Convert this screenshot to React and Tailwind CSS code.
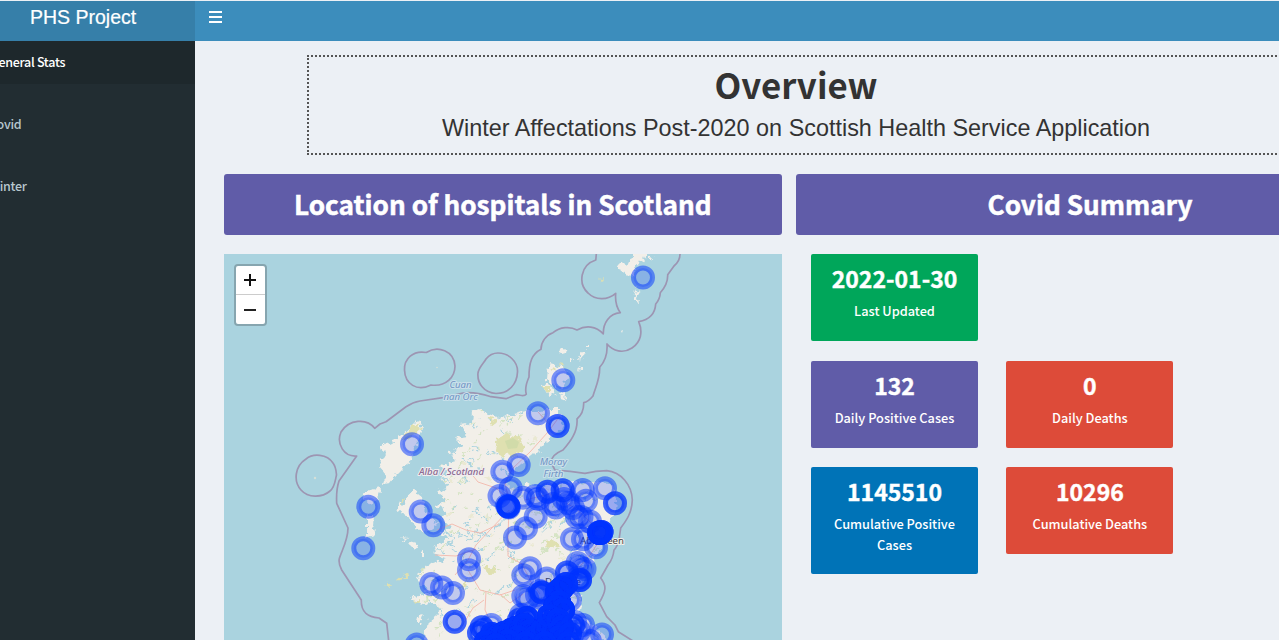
import React from "react";

const SANS = "font-['Noto_Sans_CJK_SC',sans-serif]";

const MENU = [
  { label: "General Stats", active: true, offset: "-ml-[9.9px]" },
  { label: "Covid", active: false, offset: "-ml-[11.2px]" },
  { label: "Winter", active: false, offset: "-ml-[11.2px]" },
];

/* [x, y, number of overlapping hospitals] */
const HOSPITALS = [
  [643, 277.5, 1], [563.3, 380.3, 1], [538, 413.3, 1], [557.7, 426, 2],
  [412, 444.3, 1], [368.3, 506.7, 1], [363.3, 548.3, 1], [420.7, 511.5, 1],
  [433.3, 525.3, 1], [469, 559.3, 1], [469, 570.3, 1], [431.3, 584, 1],
  [442, 587.5, 1], [453, 593, 1], [454.7, 621.7, 2], [416.7, 644.5, 1],
  [502.3, 471.7, 1], [518.7, 465, 1], [510.7, 488.3, 1], [499.5, 496, 1],
  [508.3, 506.5, 4], [508.8, 507.5, 1], [507, 505.5, 1], [523, 497.7, 1], [535.5, 496, 1], [538, 499, 1],
  [547.5, 491.7, 2], [562.7, 490.3, 2], [582.7, 490, 1], [605, 488.3, 1],
  [615, 503.3, 2], [586, 500.7, 1], [556, 507.5, 1], [553, 504, 1], [568, 503, 1],
  [564, 499, 1], [573, 508, 1], [535.7, 516.7, 1], [526, 528.3, 1], [515, 537.5, 1],
  [577, 517, 1], [581.5, 517, 1], [590, 521.5, 1], [572, 539, 1], [583, 539.3, 1],
  [600, 533, 8], [601.5, 532, 4], [599, 532.5, 4], [596, 547.3, 1], [530, 568.3, 1],
  [523.3, 575.3, 1], [546.7, 578.5, 1], [567, 572.5, 2], [577.5, 563, 1],
  [580, 567, 1], [584.5, 569, 1], [580, 580, 3], [578, 578, 1], [562, 588, 10], [557, 592, 6],
  [566, 584, 4], [541.7, 592.5, 3], [540, 591, 1], [523.3, 596, 1], [527.3, 599, 1],
  [537, 595, 1], [570, 600, 1], [559, 602, 8], [555, 607, 6], [563, 610, 8],
  [521, 615, 1], [519, 620, 2], [527, 618, 5], [536, 616, 1], [491.5, 625, 1],
  [481.7, 627.3, 2], [484, 630, 1], [479, 633, 2], [492, 634, 4], [498, 636, 6], [504, 633, 8],
  [511, 630, 8], [516, 628, 8], [524, 625, 8], [530, 631, 9], [518, 637, 9],
  [508, 641, 9], [535, 637, 9], [542, 630, 8], [548, 625, 8], [553, 632, 9],
  [549, 616, 6], [558, 620, 9], [562, 627, 9], [559, 637, 9], [573, 625.5, 2],
  [575, 622, 1], [583, 625, 1], [579, 631, 1], [570, 634, 3], [568, 643, 3], [602, 634.5, 1],
  [590, 641, 1], [486, 642, 7], [496, 645, 9], [526, 643, 9], [545, 643, 9],
];

const MAINLAND =
  "M473 411 L479 409 L486 414 L494 417 L503 415 L510 416 L518 414 L528 411 L538 411 L547 409 L560 409 L560 418 L563 427 L553 436 L546 442 L538 450 L531 457 L521 464 L512 472 L507 481 L510 490 L518 488 L527 484 L538 487 L548 484 L560 483 L575 482 L592 482 L606 481 L613 486 L616 500 L615 512 L609 525 L604 537 L601 548 L593 560 L587 568 L578 577 L566 583 L575 590 L583 600 L580 612 L590 622 L602 634 L610 641 L426 641 L434 628 L445 612 L437 604 L425 604 L412 601 L414 596 L430 593 L420 584 L417 573 L428 565 L437 562 L447 558 L434 553 L436 544 L448 538 L441 534 L452 527 L440 519 L448 513 L437 505 L446 500 L437 492 L449 486 L439 479 L448 474 L441 466 L456 462 L449 452 L463 446 L455 438 L468 436 L460 425 L472 423 Z";

const ISLANDS = [
  "M401 436 L410 428 L418 420 L421 425 L419 438 L413 450 L411 462 L402 468 L396 474 L389 483 L383 484 L386 475 L380 468 L381 458 L388 455 L380 449 L386 442 L394 446 L393 439 Z",
  "M363 494 L371 490 L381 488 L377 498 L371 505 L363 500 Z",
  "M367 516 L374 516 L373 526 L376 535 L367 538 Z",
  "M413 487 L418 494 L423 498 L424 509 L432 517 L437 525 L427 532 L417 529 L411 519 L404 514 L396 510 L399 503 L405 505 L407 498 Z",
  "M410 541 L417 543 L418 548 L413 550 L409 546 Z",
  "M420 551 L424 550 L424 556 L420 556 Z",
  "M402 539 L408 540 L406 542 Z",
  "M418 616 L423 615 L420 624 L417 624 Z",
  "M428 622 L444 608 L441 619 L434 633 L429 640 L423 640 Z",
  "M618 261 L623 262 L629 264 L634 253 L647 253 L645 259 L638 262 L635 272 L631 278 L626 273 L620 271 Z",
  "M636 288 L640 291 L637 296 L638 302 L633 300 L635 294 Z",
  "M650 256 L654 257 L650 262 Z",
  "M547 367 L552 364 L562 367 L568 373 L565 384 L559 388 L550 382 L546 380 Z",
  "M543 386 L550 385 L555 394 L550 397 L545 391 Z",
  "M559 350 L564 349 L568 352 L561 354 Z M576 360 L582 353 L586 351 L582 359 Z M578 366 L582 368 L580 371 Z M586 345 L589 345 L586 348 Z",
  "M561 392 L566 393 L565 401 L562 399 Z",
  "M570 358 L574 359 L571 364 Z",
];

const BOUNDARIES = [
  "M596.3 254 L595.8 260 C580 265 578 284 588 293 C596 301 608 300 615.7 293.3 C615 301 617 308 620.3 312.7 C609 314 603 323 603.3 334 C596 326 586 325 577 330 C570 326 560 327 553 332.7 C546 335 541 342 541 349.3 C532 354 529 362 529 377 C525 386 525 390 526.3 394.3 C524 397 521 395 516 394.7 L506 398.7 L491 396.7 C479 393 470 392 463 393 L443 397.7 L420 401 Q413 402 406 406.7 L386 421.7 L380 424 L374.7 428.3 C367 418 349 419 341 432 C336 444 344 457 356.7 456 L339 481 Q336 490 336.7 503.3 L348 528 C348 540 342 550 339.5 558 Q338 563 341.7 570 L361.3 600 C361 612 367 617 379 618 L386.7 623.3 L388.7 641",
  "M680 254 Q680 261 674 266 L667.7 274.7 Q668 284 660.3 292.7 Q660 299 655.7 304 C655 315 648 320 638.7 321.7 C643 332 641 342 632 348 C623 354 613 351 607 344 Q608 358 599.7 367.3 C600 380 595 388 593 396 Q588 402 583.7 402.7 Q584 413 577 419 C578 432 570 442 563 450 C556 453 550 458 551.7 464 L555 470 L570 471.3 L585 473.3 Q596 471 606.7 470.7 C621 472 632 485 632.3 500 C632 513 626 521 620.7 528 L619 540 Q617 547 614 550 Q613 559 608 565 L600.7 578 C607 586 606 591 599.3 602.7 L606.7 616.7 L615 625 L618.3 631.7 L633 641",
  "M426.3 352.5 C413 350 404 359 404.5 370 C405 384 417 392 431 385 C446 387 455 377 455 366 C454 351 438 345 426.3 352.5 Z",
  "M498 353 C509 353 518 362 517.5 372 C517 384 509 393.5 496 393.5 C484 393 477 383 478 373 C479 367 484 363 486 359 C490 354 494 353 498 353 Z",
  "M306 459 C313 453 327 454 333 463 C336 467 336 470 336.5 475 C335 481 335 487 330 491 C322 498 308 498 301 490 C293 481 295 466 306 459 Z",
];

const ROADS = [
  "M560 416 L548 432 L530 452 L513 468 L505 483 L509 500",
  "M470 472 L478 482 L496 488 L505 496", "M509 510 L490 530 L476 545 L468 560 L455 575",
  "M437 530 L452 524 L466 530 L480 533 L499 524", "M435 555 L456 556 L476 549",
  "M509 510 L508 535 L508 556 L522 564 L531 582 L540 594", "M468 570 L480 590 L500 595 L515 590",
  "M486 592 L485 610 L492 625", "M525 500 L550 494 L575 508 L600 531", "M600 540 L590 555 L575 572 L560 585",
  "M500 594 L510 603 L523 594", "M462 626 L473 608 L484 600", "M538 412 L550 425",
];

const WOODS = [
  "M497 440 L505 434 L517 436 L524 443 L522 452 L514 457 L508 454 L501 456 L495 449 Z",
  "M546 542 L556 540 L559 545 L552 548 L545 547 Z",
  "M487 567 L495 567 L495 572 L488 576 L484 572 Z",
  "M490 418 L495 419 L494 426 L490 425 Z",
  "M401 437 L418 422 L420 429 L412 436 L404 441 Z",
  "M387 583 L392 585 L389 589 L385 587 Z M398 580 L409 571 L407 576 L400 581 Z",
  "M402 496 L405 499 L402 504 Z", "M414 600 L421 599 L419 603 L412 602 Z",
  "M551 369 L556 366 L557 371 Z M543 387 L550 387 L550 392 L546 392 Z M558 363 L564 364 L562 367 Z",
  "M599 279 L603 278 L602 281 Z", "M464 582 L468 580 L464 590 L461 588 Z",
];

function scatter(seed, count) {
  let s = seed;
  const next = () => {
    s = (s * 16807) % 2147483647;
    return s / 2147483647;
  };
  return Array.from({ length: count }, () => {
    const x = 415 + next() * 190;
    const y = 410 + next() * 230;
    const len = 2 + next() * 7;
    return { x, y, len, t: next() };
  });
}

const streak = (list, dx, dy) =>
  list
    .map((p) => `M${p.x.toFixed(1)} ${p.y.toFixed(1)}l${(p.len * dx * (0.5 + p.t)).toFixed(1)} ${(p.len * dy * (0.2 + p.t)).toFixed(1)}`)
    .join("");

const LOCHS_NW = streak(scatter(41, 200).filter((p) => p.x < 505 && p.y < 550), 1, 0.9);
const LOCHS_SW = streak(scatter(97, 110).filter((p) => p.y > 500), 0.8, -1);
const GREENS = streak(scatter(733, 300), 0.5, -0.5);
const PALE = streak(scatter(1999, 60), 0.6, 0.3);

function HospitalMap() {
  return (
    <svg className="block h-full w-full" viewBox="224 254 558.5 386" preserveAspectRatio="none">
      <defs>
        <filter id="coast" x="-5%" y="-5%" width="110%" height="110%" colorInterpolationFilters="sRGB">
          <feTurbulence type="fractalNoise" baseFrequency="0.2" numOctaves="2" seed="4" />
          <feDisplacementMap in="SourceGraphic" scale="9" xChannelSelector="R" yChannelSelector="G" />
        </filter>
        <clipPath id="mainland">
          <path d={MAINLAND} />
        </clipPath>
      </defs>
      <rect x="223" y="253" width="560" height="388" fill="#aad3df" />
      <g filter="url(#coast)">
        <g fill="#f2efe9">
          <path d={MAINLAND} />
          {ISLANDS.map((d) => <path key={d} d={d} />)}
        </g>
        <g clipPath="url(#mainland)" fill="none" strokeLinecap="round">
          <path d={GREENS} stroke="#c9dfb4" strokeWidth="1.6" opacity="0.75" />
          <path d={PALE} stroke="#e4e5c3" strokeWidth="2.2" opacity="0.6" />
          <path d={LOCHS_NW} stroke="#aad3df" strokeWidth="1.4" />
          <path d={LOCHS_SW} stroke="#aad3df" strokeWidth="1.3" />
        </g>
        <g fill="#dfe0b0">{WOODS.map((d) => <path key={d} d={d} />)}</g>
      </g>
      <path d="M505 441l8 -3 6 4 -2 6 -9 1z" fill="#cbd8a6" opacity="0.7" />
      <g fill="none" stroke="#f3b9ad" strokeWidth="1" opacity="0.9">
        {ROADS.map((d) => <path key={d} d={d} />)}
      </g>
      <g fill="none" stroke="#9c8fae" strokeWidth="1.7" strokeLinejoin="round" opacity="0.9">
        {BOUNDARIES.map((d) => <path key={d} d={d} />)}
      </g>
      <circle cx="437" cy="367.5" r="0.8" fill="#d5e0d8" />
      <circle cx="315" cy="478" r="1.2" fill="#d5e0d8" />
      <path d="M621 331 l2 -1 -1 3z" fill="#f2efe9" />
      <g
        textAnchor="middle"
        className="font-['Noto_Sans',sans-serif] italic"
        fontSize="9"
        strokeLinejoin="round"
        paintOrder="stroke"
        strokeWidth="2"
      >
        <g fill="#6f93c4" stroke="#c9e0ea">
          <text x="460.5" y="388" textLength="22" lengthAdjust="spacingAndGlyphs">Cuan</text>
          <text x="460.5" y="399.5" textLength="34" lengthAdjust="spacingAndGlyphs">nan Orc</text>
          <text x="553.5" y="465" textLength="27" lengthAdjust="spacingAndGlyphs">Moray</text>
          <text x="553.5" y="476.5" textLength="20" lengthAdjust="spacingAndGlyphs">Firth</text>
        </g>
        <text x="451.5" y="474.5" textLength="65" lengthAdjust="spacingAndGlyphs" fill="#8b6a91" stroke="#f0edf0" fontWeight="500">
          Alba / Scotland
        </text>
      </g>
      <g className="font-['Noto_Sans',sans-serif]" fontSize="9.5" fill="#444" stroke="#f2efe9" strokeWidth="2" paintOrder="stroke">
        <text x="580" y="544" textLength="44" lengthAdjust="spacingAndGlyphs">Aberdeen</text>
        <text x="545" y="585" textLength="36" lengthAdjust="spacingAndGlyphs">Dundee</text>
      </g>
      <g stroke="#0033ff" strokeWidth="5" strokeOpacity="0.5" fill="#0033ff" fillOpacity="0.2">
        {HOSPITALS.flatMap(([x, y, n], i) =>
          Array.from({ length: n }, (_, k) => <circle key={`${i}-${k}`} cx={x} cy={y} r="9.5" />)
        )}
      </g>
    </svg>
  );
}

function ValueBox({ value, label, color, tall }) {
  return (
    <div className={`${color} ${tall ? "h-[107px]" : "h-[87px]"} w-[167px] rounded-[2px] px-[10px] pt-[8px] text-center text-white`}>
      <div className="text-[23px] leading-[32px] font-bold [-webkit-text-stroke:0.4px_white]">{value}</div>
      <div className="mt-[7px] text-[12.75px] leading-[20.5px] font-medium">{label}</div>
    </div>
  );
}

function SectionTitle({ children, width }) {
  return (
    <div className={`${width} h-[61px] shrink-0 rounded-[3px] bg-[#605ca8] pt-[11px] text-center text-[26.2px] leading-[39px] font-bold text-white [-webkit-text-stroke:0.5px_white]`}>
      {children}
    </div>
  );
}

export default function App() {
  return (
    <div className={`${SANS} flex h-[640px] w-[1279px] flex-col overflow-hidden bg-[#ecf0f5] pt-px`}>
      <header className="flex h-10 shrink-0 bg-[#3c8dbc]">
        <div className="w-[195px] bg-[#367fa9] pl-[30px] font-['Liberation_Sans',sans-serif] text-[19.5px] leading-[33px] whitespace-nowrap text-white [-webkit-text-stroke:0.2px_white]">
          PHS Project
        </div>
        <button className="flex h-[32px] flex-col justify-center gap-[3px] pl-[14px]" aria-label="Toggle navigation">
          <span className="h-[2px] w-[13px] bg-white" />
          <span className="h-[2px] w-[13px] bg-white" />
          <span className="h-[2px] w-[13px] bg-white" />
        </button>
      </header>
      <div className="flex min-h-0 flex-1">
        <nav className="flex w-[195px] shrink-0 flex-col gap-[19px] overflow-hidden bg-[#222d32]">
          {MENU.map((item) => (
            <div
              key={item.label}
              className={`flex h-[43px] items-center pb-[2px] text-[12.5px] leading-5 font-medium tracking-[-0.3px] whitespace-nowrap ${
                item.active ? "bg-[#1e282c] text-white" : "text-[#b8c7ce]"
              }`}
            >
              <span className={item.offset}>{item.label}</span>
            </div>
          ))}
        </nav>
        <main className="flex w-[1084px] shrink-0 flex-col overflow-hidden pt-[14px]">
          <div className="ml-[112px] h-[100px] w-[978px] shrink-0 border-2 border-dotted border-[#555] text-center text-[#333]">
            <h1 className="mt-[5px] text-[34.8px] leading-[44px] font-bold">Overview</h1>
            <h2 className="mt-[7px] font-['Liberation_Sans',sans-serif] text-[23.4px] leading-[30px]">
              Winter Affectations Post-2020 on Scottish Health Service Application
            </h2>
          </div>
          <div className="mt-[19px] ml-[28.5px] flex gap-[14px]">
            <SectionTitle width="w-[558.5px]">Location of hospitals in Scotland</SectionTitle>
            <SectionTitle width="w-[588px]">Covid Summary</SectionTitle>
          </div>
          <div className="mt-[19px] ml-[28.5px] flex min-h-0 flex-1">
            <div className="relative h-[386px] w-[558.5px] shrink-0 overflow-hidden">
              <HospitalMap />
              <div className="absolute top-[10px] left-[10px] flex w-[33px] flex-col rounded-[4px] border-2 border-[#86a5af] bg-white">
                <button className="flex h-[29px] items-center justify-center border-b border-[#ccc]" aria-label="Zoom in">
                  <svg width="12" height="12" viewBox="0 0 12 12" stroke="#111" strokeWidth="2"><path d="M0 6h12M6 0v12" /></svg>
                </button>
                <button className="flex h-[29px] items-center justify-center" aria-label="Zoom out">
                  <svg width="12" height="12" viewBox="0 0 12 12" stroke="#222" strokeWidth="2"><path d="M0 6h12" /></svg>
                </button>
              </div>
            </div>
            <div className="ml-[29px] grid shrink-0 grid-cols-[167px_167px] content-start gap-x-[28.4px] gap-y-[19.5px]">
              <ValueBox value="2022-01-30" label="Last Updated" color="bg-[#00a65a]" />
              <span />
              <ValueBox value="132" label="Daily Positive Cases" color="bg-[#605ca8]" />
              <ValueBox value="0" label="Daily Deaths" color="bg-[#dd4b39]" />
              <ValueBox value="1145510" label="Cumulative Positive Cases" color="bg-[#0073b7]" tall />
              <ValueBox value="10296" label="Cumulative Deaths" color="bg-[#dd4b39]" />
            </div>
          </div>
        </main>
      </div>
    </div>
  );
}
